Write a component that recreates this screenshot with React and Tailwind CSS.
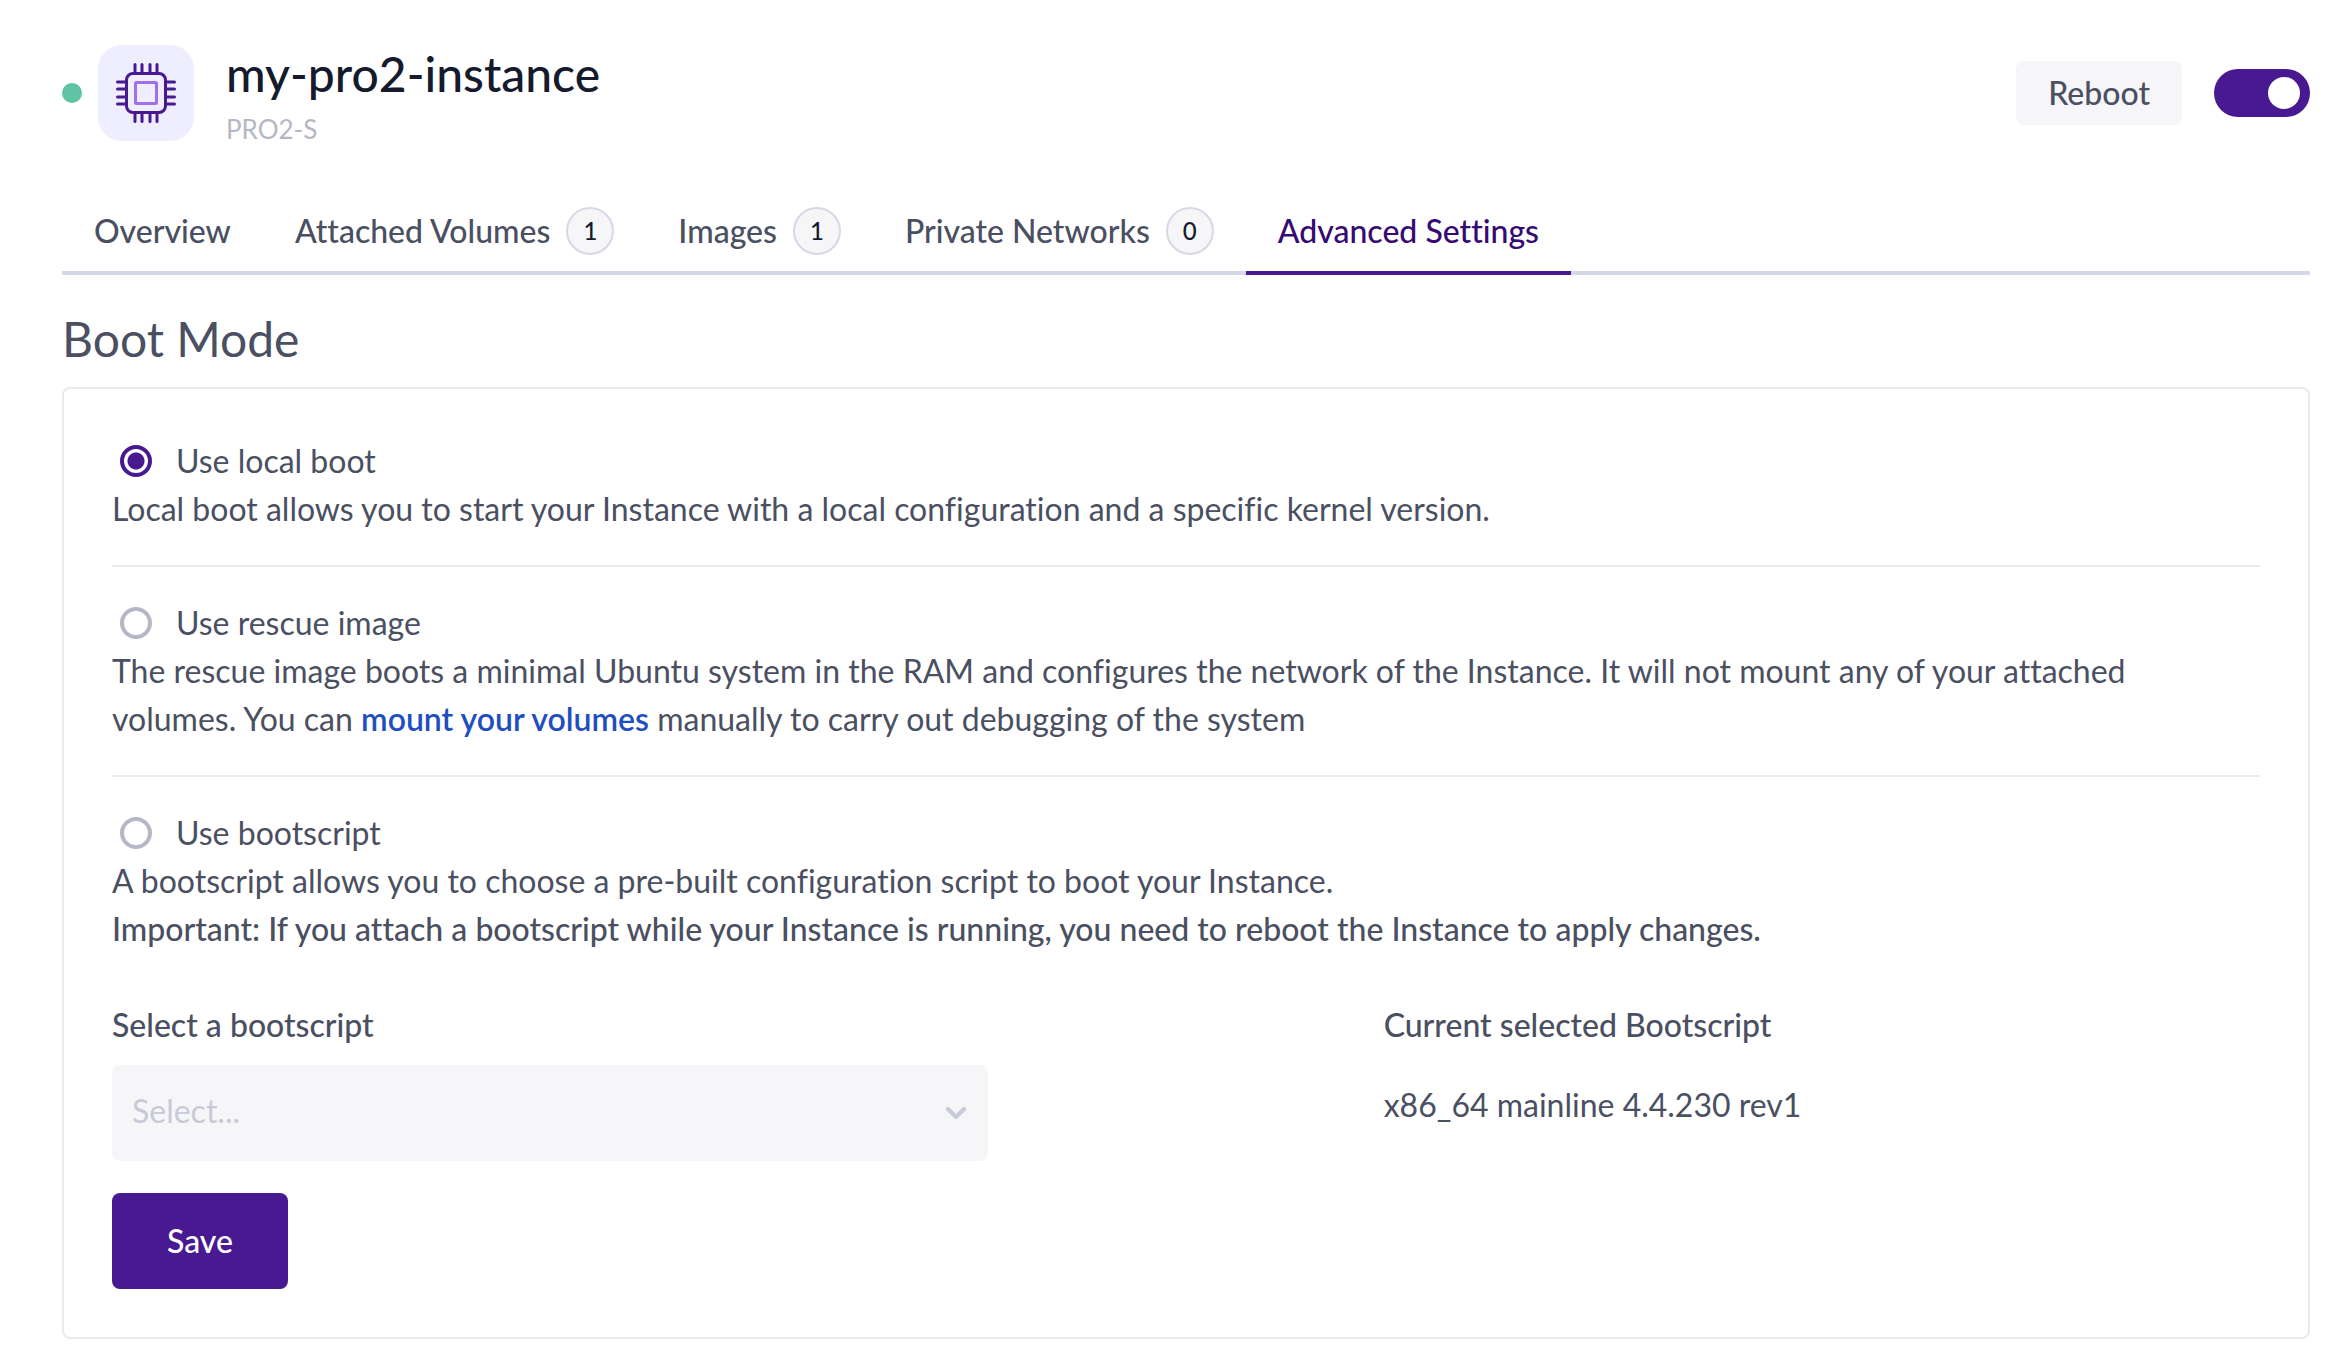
import { useState } from "react";

const tabs = [
  { label: "Overview" },
  { label: "Attached Volumes", count: 1 },
  { label: "Images", count: 1 },
  { label: "Private Networks", count: 0 },
  { label: "Advanced Settings", active: true },
];

function ChipIcon() {
  const pins = [19, 26, 34, 41];
  return (
    <svg viewBox="0 0 60 60" className="size-[60px]" fill="none" strokeWidth="3" strokeLinecap="round" aria-hidden="true">
      <g stroke="#481991">
        <rect x="10.5" y="10.5" width="39" height="39" rx="6.5" />
        {pins.map((p) => (
          <path key={p} d={`M${p} 1.5V10M${p} 50V58.5M1.5 ${p}H10M50 ${p}H58.5`} />
        ))}
      </g>
      <rect x="19.5" y="19.5" width="21" height="21" rx="1" stroke="#a06ff0" />
    </svg>
  );
}

function BootOption({ id, label, value, onChange, children }) {
  return (
    <div>
      <div className="flex h-12 items-center gap-6 pl-2">
        <input
          type="radio"
          name="boot-mode"
          id={id}
          checked={value === id}
          onChange={() => onChange(id)}
          className="size-8 appearance-none rounded-full border-4 border-[#b5b7c6] bg-white checked:border-[#481991] checked:bg-[radial-gradient(circle,#481991_8px,white_9px)]"
        />
        <label htmlFor={id}>{label}</label>
      </div>
      <div className="pr-8">{children}</div>
    </div>
  );
}

export default function App() {
  const [mode, setMode] = useState("local");
  return (
    <main className="bg-white pt-[45px] pr-6 pb-7 pl-[62px] font-['Lato',sans-serif] text-[32px] leading-[48px] text-[#4a4f62] [font-variant-ligatures:none]">
      <header className="flex items-start">
        <div className="flex h-24 items-center gap-4">
          <span className="size-5 rounded-full bg-[#5fc4a3]" role="img" aria-label="Running" />
          <div className="flex size-24 items-center justify-center rounded-3xl bg-[#eeeeff]">
            <ChipIcon />
          </div>
        </div>
        <div className="ml-8">
          <h1 className="text-[48px] leading-[58px] font-medium text-[#151a2d]">my-pro2-instance</h1>
          <p className="text-[26px] leading-[52px] text-[#b5b7c6]">PRO2-S</p>
        </div>
        <div className="ml-auto flex h-24 items-center gap-8">
          <button type="button" className="h-16 rounded-lg bg-[#f6f6f8] px-8 font-medium">Reboot</button>
          <input
            type="checkbox"
            role="switch"
            aria-label="Power"
            defaultChecked
            className="h-12 w-24 appearance-none rounded-full bg-[#b5b7c6] p-2 before:block before:size-8 before:rounded-full before:bg-white checked:bg-[#481991] checked:before:mr-0.5 checked:before:ml-auto"
          />
        </div>
      </header>

      <nav className="mt-9 flex border-b-4 border-[#d5d9e6] font-medium">
        {tabs.map((t) => (
          <a
            key={t.label}
            href="#"
            className={
              t.active
                ? "-mb-1 flex h-[84px] items-center border-b-4 border-[#481991] px-8 text-[#350a72]"
                : "flex h-20 items-center gap-4 px-8"
            }
          >
            {t.label}
            {t.count !== undefined && (
              <span className="flex size-12 items-center justify-center rounded-full border-2 border-[#d5d9e6] bg-[#f6f6f8] text-2xl text-[#151a2d]">
                {t.count}
              </span>
            )}
          </a>
        ))}
      </nav>

      <h2 className="mt-8 text-[48px] leading-[64px]">Boot Mode</h2>

      <form className="mt-4 rounded-lg border-2 border-[#e9eaf0] p-12" onSubmit={(e) => e.preventDefault()}>
        <BootOption id="local" label="Use local boot" value={mode} onChange={setMode}>
          <p>Local boot allows you to start your Instance with a local configuration and a specific kernel version.</p>
        </BootOption>
        <hr className="my-8 border-t-2 border-[#e9eaf0]" />
        <BootOption id="rescue" label="Use rescue image" value={mode} onChange={setMode}>
          <p>
            The rescue image boots a minimal Ubuntu system in the RAM and configures the network of the Instance. It will not mount any of your attached volumes. You can{" "}
            <a href="#" className="font-semibold text-[#1f4fbf]">mount your volumes</a> manually to carry out debugging of the system
          </p>
        </BootOption>
        <hr className="my-8 border-t-2 border-[#e9eaf0]" />
        <BootOption id="bootscript" label="Use bootscript" value={mode} onChange={setMode}>
          <p>A bootscript allows you to choose a pre-built configuration script to boot your Instance.</p>
          <p className="font-medium">
            Important: If you attach a bootscript while your Instance is running, you need to reboot the Instance to apply changes.
          </p>
        </BootOption>

        <div className="mt-12 grid grid-cols-12 gap-8">
          <div className="col-span-5">
            <label htmlFor="script" className="block font-medium">Select a bootscript</label>
            <div className="mt-4 grid items-center">
              <select
                id="script"
                disabled
                className="col-start-1 row-start-1 h-24 w-full appearance-none rounded-lg bg-[#f6f6f8] px-5 pb-1 text-[#c8cad9] opacity-100"
              >
                <option>Select...</option>
              </select>
              <svg viewBox="0 0 20 12" className="pointer-events-none col-start-1 row-start-1 mr-[22px] h-3 w-5 justify-self-end" fill="none" stroke="#c5c9d8" strokeWidth="4" strokeLinecap="round" strokeLinejoin="round" aria-hidden="true">
                <path d="M2 2l8 8 8-8" />
              </svg>
            </div>
          </div>
          <div className="col-span-5 col-start-8">
            <h3 className="font-medium">Current selected Bootscript</h3>
            <p className="mt-8">x86_64 mainline 4.4.230 rev1</p>
          </div>
        </div>
        <button type="submit" className="mt-8 h-24 rounded-lg bg-[#481991] px-[55px] font-medium text-white">Save</button>
      </form>
    </main>
  );
}
